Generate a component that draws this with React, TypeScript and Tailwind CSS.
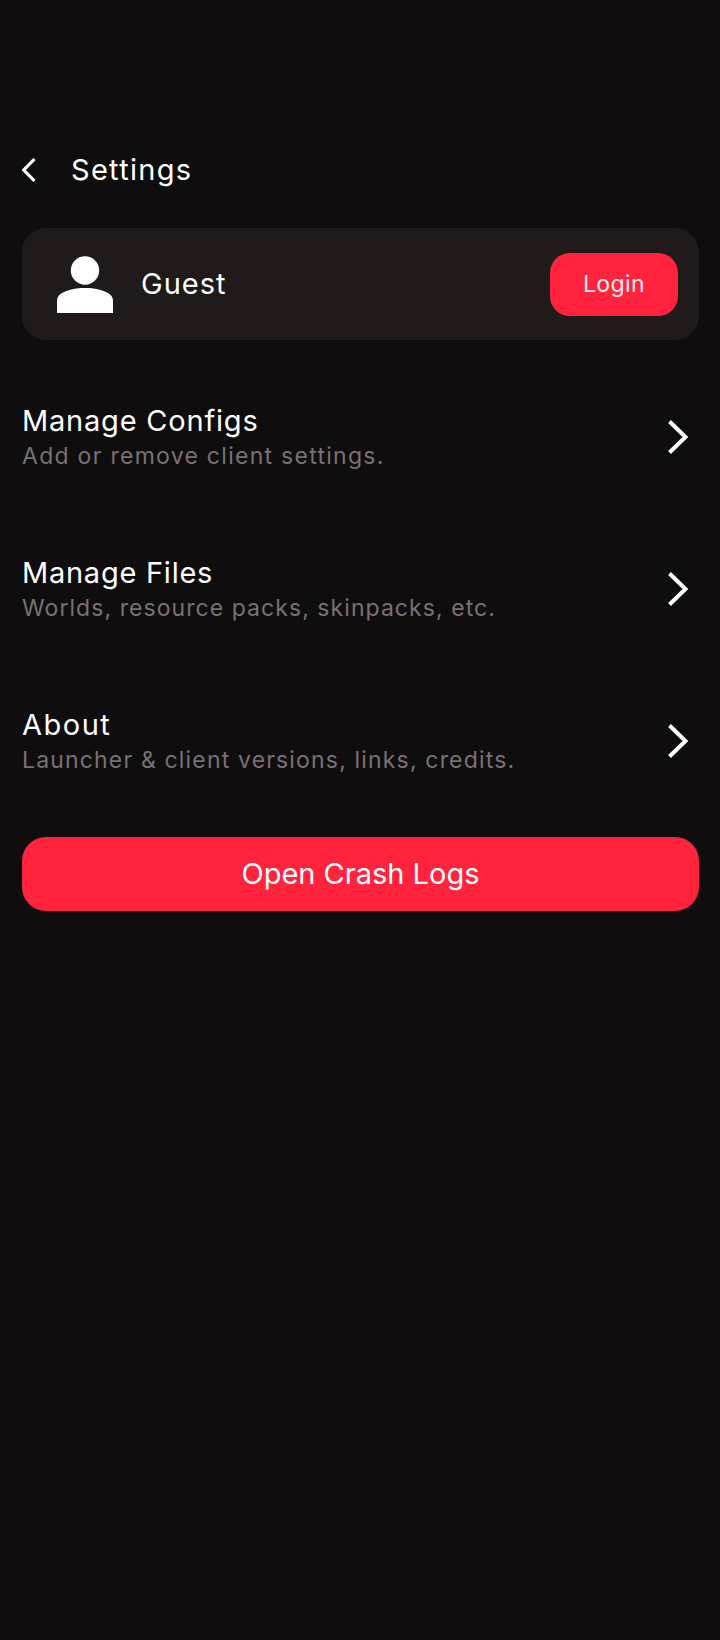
import React from "react";

const font = "font-['Inter','Noto_Sans',sans-serif]";

function Chevron() {
  return (
    <svg width="24" height="36" viewBox="0 0 24 36" fill="none" className="mb-[3px] shrink-0">
      <path d="M3.5 2.5 L19.5 18 L3.5 33.5" stroke="#fff" strokeWidth="4" />
    </svg>
  );
}

function Row({ title, sub, titleClass, subClass }: { title: string; sub: string; titleClass: string; subClass: string }) {
  return (
    <div className="flex h-[152px] items-center justify-between pr-[9px]">
      <div className="flex flex-col">
        <span className={`text-[29px] leading-[36px] text-white ${titleClass}`}>{title}</span>
        <span className={`text-[23px] leading-[34px] text-[#7b7075] ${subClass}`}>{sub}</span>
      </div>
      <Chevron />
    </div>
  );
}

export default function App() {
  return (
    <div className={`${font} flex h-[1640px] w-[720px] flex-col bg-[#100d0f] pt-[150px] pr-[21px] pl-[22px] text-white`}>
      <div className="flex h-[40px] items-center">
        <svg width="16" height="26" viewBox="1 0 16 26" fill="none" className="shrink-0">
          <path d="M13.5 2 L2.8 13 L13.5 24" stroke="#fff" strokeWidth="3.2" />
        </svg>
        <span className="ml-[33px] text-[29px] tracking-[1.3px]">Settings</span>
      </div>
      <div className="mt-[38px] flex h-[112px] items-center justify-between rounded-[24px] bg-[#211a1b] pr-[21px] pl-[35px]">
        <div className="flex items-center">
          <svg width="56" height="57" viewBox="0 0 56 57" fill="#fff" className="shrink-0">
            <circle cx="28" cy="14.5" r="14.2" />
            <path d="M0 57 V45 C0 39 5 36.5 11 34.5 C17 32.5 22 32 28 32 C34 32 39 32.5 45 34.5 C51 36.5 56 39 56 45 V57 Z" />
          </svg>
          <span className="ml-[28px] text-[29px] tracking-[1px]">Guest</span>
        </div>
        <div className="flex h-[63px] w-[128px] items-center justify-center rounded-[20px] bg-[#ff233d] text-[23px] tracking-[0.4px] text-[#ffeef0]">
          Login
        </div>
      </div>
      <div className="mt-[22px] flex flex-col">
        <Row title="Manage Configs" sub="Add or remove client settings." titleClass="tracking-[0.8px]" subClass="tracking-[1.28px]" />
        <Row title="Manage Files" sub="Worlds, resource packs, skinpacks, etc." titleClass="tracking-[0.75px]" subClass="tracking-[1.06px]" />
        <Row title="About" sub="Launcher & client versions, links, credits." titleClass="tracking-[1.5px]" subClass="tracking-[1.17px]" />
      </div>
      <div className="mt-[19px] flex h-[74px] items-center justify-center rounded-[24px] bg-[#ff233d] text-[29px]">
        Open Crash Logs
      </div>
    </div>
  );
}
